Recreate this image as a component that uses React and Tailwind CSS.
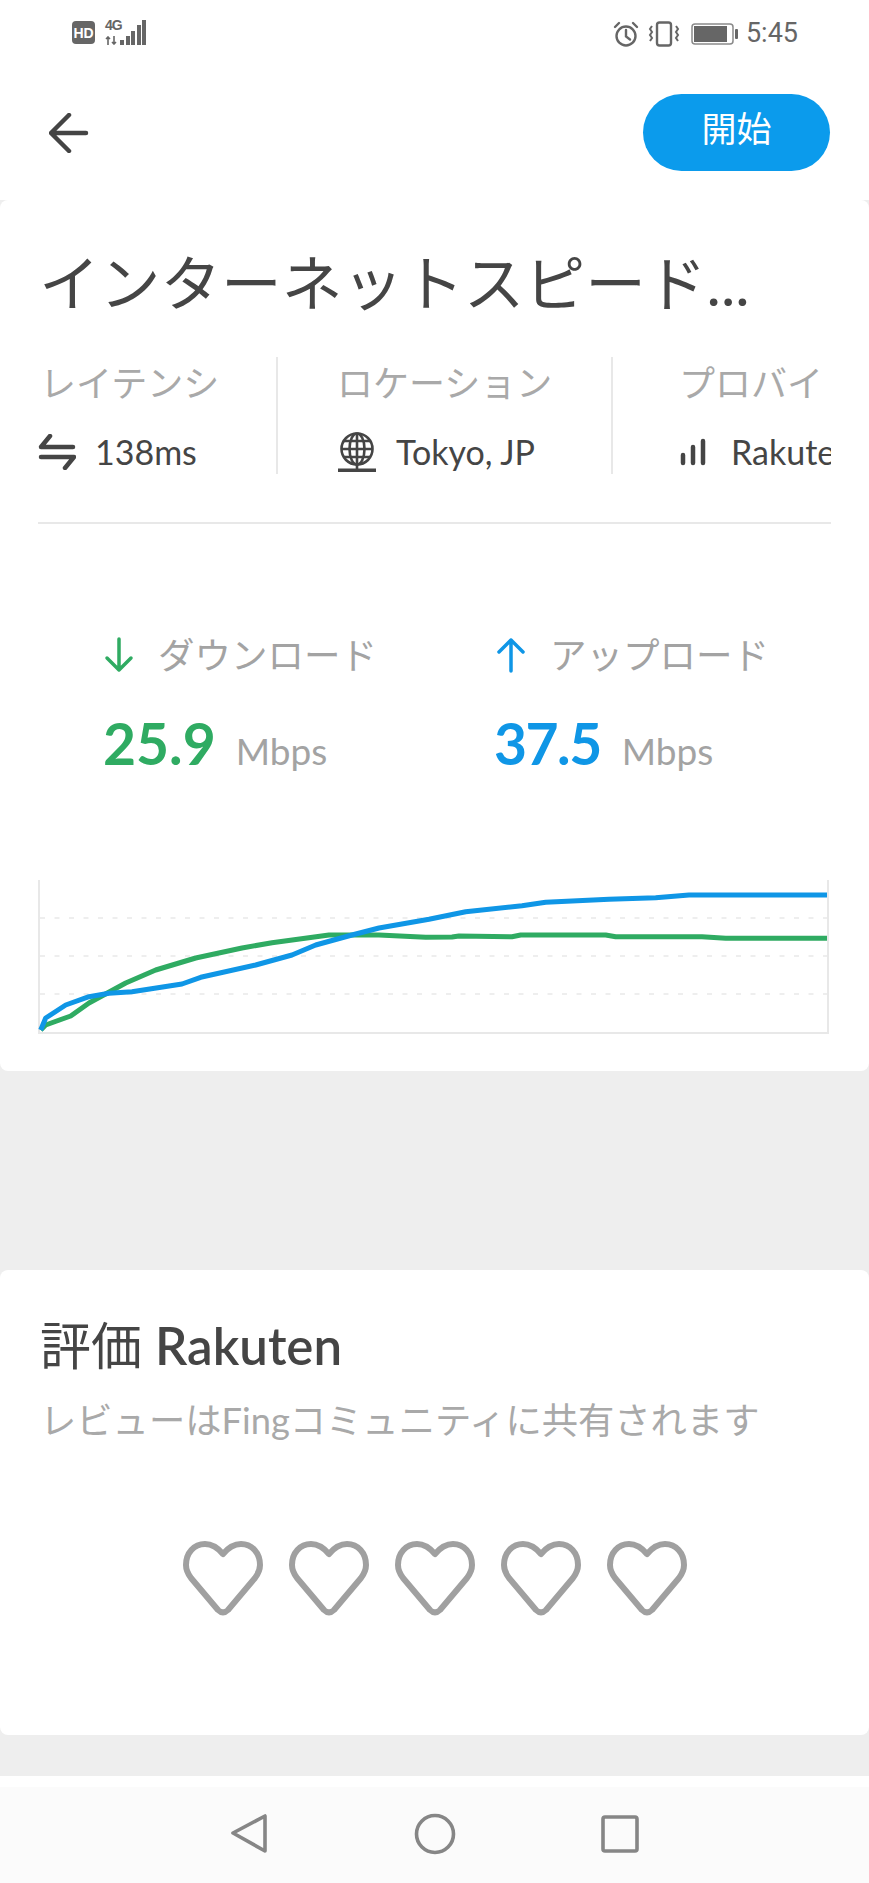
import React from "react";

const jp = "font-['Lato','Noto_Sans_CJK_JP',sans-serif]";

const green = [
  [41.7, 1030], [46.7, 1025], [71.7, 1016], [90, 1003], [126.7, 983], [156.7, 970], [196.7, 958],
  [243, 948], [273, 942.7], [330, 935], [380, 935], [426.7, 937.3], [453, 937], [460, 936],
  [513, 936.7], [521.7, 935], [606.7, 935], [616.7, 936.7], [703, 936.7], [726.7, 938.3], [828, 938.3],
];

const blue = [
  [41.7, 1030], [46.7, 1018], [66.7, 1005], [90, 996.7], [110, 993.3], [133, 991.7], [183, 984],
  [201.7, 977.3], [256.7, 965], [293, 955], [316.7, 945], [353, 935], [380, 928], [430, 919.3],
  [466.7, 911.7], [523, 905.7], [546.7, 902.3], [610, 899.3], [656.7, 897.7], [690, 895], [828, 895],
];

const toPoints = (list) => list.map((p) => p.join(",")).join(" ");

function StatusBar() {
  return (
    <div className="h-[60px] flex items-start justify-between pl-[72px] pr-[71px] pt-[20px] text-[#666666]">
      <div className="flex">
        <div className="w-[23px] h-[23px] mt-[1px] rounded-[4px] bg-[#666666] flex items-center justify-center text-white text-[14px] leading-none font-bold font-['Liberation_Sans',sans-serif]">
          HD
        </div>
        <div className="ml-[10px] w-[14px] flex flex-col">
          <span className="text-[14px] leading-[11px] font-bold tracking-[-1px] font-['Liberation_Sans',sans-serif]">4G</span>
          <svg width="14" height="9" viewBox="0 0 14 9" className="mt-[5px]" fill="none" stroke="#666666" strokeWidth="1.6">
            <path d="M3 9V1M1 3l2-2 2 2M9 0v8M7 6l2 2 2-2" />
          </svg>
        </div>
        <svg width="28" height="25" viewBox="0 0 28 25" className="-ml-[1px]" fill="#666666">
          <rect x="2" y="20" width="4" height="5" />
          <rect x="8" y="16" width="4" height="9" />
          <rect x="13" y="11" width="4" height="14" />
          <rect x="19" y="5" width="4" height="20" />
          <rect x="24" y="0" width="4" height="25" />
        </svg>
      </div>
      <div className="flex items-center">
        <svg width="26" height="26" viewBox="0 0 26 26" fill="none" stroke="#666666" strokeWidth="2.4" strokeLinecap="round">
          <circle cx="13" cy="15" r="9.5" />
          <path d="M13 9v6.5l4 3M2 6l4-4M24 6l-4-4" />
        </svg>
        <svg width="34" height="26" viewBox="0 0 34 26" className="ml-[8px]" fill="none" stroke="#666666" strokeWidth="2">
          <rect x="10" y="1.5" width="14" height="23" rx="2.5" strokeWidth="2.4" />
          <path d="M5 5l-2 3 2 3-2 3 2 3-2 3M29 5l2 3-2 3 2 3-2 3 2 3" />
        </svg>
        <svg width="47" height="22" viewBox="0 0 47 22" className="ml-[10px]">
          <rect x="1" y="1" width="41" height="20" rx="3" fill="none" stroke="#8a8a8a" strokeWidth="1.5" />
          <rect x="3" y="3" width="33" height="16" fill="#666666" />
          <rect x="44" y="6" width="3" height="10" rx="1" fill="#666666" />
        </svg>
        <span className="ml-[8px] text-[27px] leading-none font-['Roboto',sans-serif]">5:45</span>
      </div>
    </div>
  );
}

function Header() {
  return (
    <div className="h-[140px] flex items-start justify-between pl-[49px] pr-[39px] pt-[34px]">
      <svg width="40" height="40" viewBox="0 0 40 40" className="mt-[19px]" fill="none" stroke="#444444" strokeWidth="4.5" strokeLinecap="round" strokeLinejoin="round">
        <path d="M37 20H3M20 2L2 20l18 18" />
      </svg>
      <button className={`w-[187px] h-[77px] pb-[8px] rounded-full bg-[#0b9bec] text-white text-[35px] leading-none ${jp}`}>
        開始
      </button>
    </div>
  );
}

function Stat({ label, icon, value, className }) {
  return (
    <div className={`h-[117px] shrink-0 ${className}`}>
      <div className="text-[36px] leading-[52px] text-[#a9a9a9] whitespace-nowrap">{label}</div>
      <div className="mt-[23px] flex items-center text-[34px] leading-[40px] text-[#454545] whitespace-nowrap">
        {icon}
        {value}
      </div>
    </div>
  );
}

function Speed({ color, arrow, label, value, gap, numberClass, className }) {
  return (
    <div className={`w-[390px] shrink-0 ${className}`}>
      <div className="flex items-center h-[52px]">
        <svg width="30" height="36" viewBox="0 0 30 36" fill="none" stroke={color} strokeWidth="3.5" strokeLinecap="round" strokeLinejoin="round">
          <path d={arrow} />
        </svg>
        <span className="ml-[24px] text-[36.5px] leading-none text-[#a3a3a3] whitespace-nowrap">{label}</span>
      </div>
      <div className="mt-[30px] flex items-baseline h-[64px]">
        <span className={`text-[57px] leading-[64px] font-bold ${numberClass}`} style={{ color }}>{value}</span>
        <span className={`text-[37px] leading-none text-[#a3a3a3] ${gap}`}>Mbps</span>
      </div>
    </div>
  );
}

function Chart() {
  return (
    <svg width="792" height="156" viewBox="39 879 792 156" className="block mt-[104px] ml-[38px]" fill="none">
      <path d="M40 880V1033H829V880" stroke="#e8e8e8" strokeWidth="2" />
      <path d="M41 918H828M41 956H828M41 994H828" stroke="#e9e9e9" strokeWidth="1.5" strokeDasharray="5 9.5" />
      <polyline points={toPoints(green)} stroke="#2fab62" strokeWidth="5" strokeLinejoin="round" />
      <polyline points={toPoints(blue)} stroke="#0f96e6" strokeWidth="5" strokeLinejoin="round" />
    </svg>
  );
}

function Heart() {
  return (
    <svg width="80" height="76" viewBox="0 0 80 76" fill="none" stroke="#a0a0a0" strokeWidth="6" strokeLinejoin="round">
      <path d="M40 13C35 7 29 3 22 3C11 3 3 12 3 24C3 29 5 33 8 37L35 69Q40 74 45 69L72 37C75 33 77 29 77 24C77 12 69 3 58 3C51 3 45 7 40 13Z" />
    </svg>
  );
}

export default function App() {
  return (
    <div className={`w-[869px] h-[1883px] flex flex-col bg-white ${jp}`}>
      <StatusBar />
      <Header />
      <div className="bg-[#eeeeee] flex flex-col">
        <div className="h-[871px] bg-white rounded-[8px] overflow-hidden pt-[46px]">
          <h1 className="ml-[39px] text-[60.7px] leading-[74px] font-normal text-[#454545] whitespace-nowrap">インターネットスピード...</h1>

          <div className="mt-[37px] mx-[38px] flex overflow-hidden">
            <Stat
              className="w-[240px] pl-[2px] border-r-2 border-[#e8e8e8]"
              label="レイテンシ"
              value="138ms"
              icon={
                <svg width="38" height="36" viewBox="0 0 38 36" className="shrink-0 -ml-[2px] mr-[19px]" fill="none" stroke="#454545" strokeWidth="4.5" strokeLinecap="round" strokeLinejoin="round">
                  <path d="M35 13H3L12 2M3 23H36L27 34" />
                </svg>
              }
            />
            <Stat
              className="w-[335px] pl-[59px] border-r-2 border-[#e8e8e8]"
              label="ロケーション"
              value="Tokyo, JP"
              icon={
                <svg width="40" height="40" viewBox="0 0 40 40" className="shrink-0 mr-[19px]" fill="none" stroke="#454545" strokeWidth="2.6">
                  <circle cx="20" cy="17" r="15.5" />
                  <ellipse cx="20" cy="17" rx="7.5" ry="15.5" />
                  <path d="M20 1.5V32.5M4.5 17H35.5M7 9H33M7 25H33M20 32v6" />
                  <path d="M1 38.3H39" strokeWidth="3.4" />
                </svg>
              }
            />
            <Stat
              className="flex-1 min-w-0 overflow-hidden pl-[66px]"
              label="プロバイ"
              value="Rakuten"
              icon={
                <svg width="28" height="28" viewBox="0 0 28 28" className="shrink-0 mr-[24px]" fill="none" stroke="#454545" strokeWidth="4.5" strokeLinecap="round">
                  <path d="M4 25V17M14 25V9M24 25V3" />
                </svg>
              }
            />
          </div>

          <div className="mt-[48px] mx-[38px] h-[2px] bg-[#e8e8e8]" />

          <div className="mt-[105px] flex">
            <Speed
              className="ml-[104px]"
              color="#2fab62"
              arrow="M15 2V33M3 21L15 33L27 21"
              label="ダウンロード"
              value="25.9"
              numberClass="-ml-[1px]"
              gap="ml-[20px]"
            />
            <Speed
              className="ml-[2px]"
              color="#0f96e6"
              arrow="M15 34V3M3 15L15 3L27 15"
              label="アップロード"
              value="37.5"
              numberClass="-ml-[2px] tracking-[-1.5px]"
              gap="ml-[21px]"
            />
          </div>

          <Chart />
        </div>

        <div className="h-[199px]" />

        <div className="h-[465px] bg-white rounded-[8px] pt-[46px]">
          <h2 className="ml-[40px] text-[51px] leading-[60px] font-normal text-[#454545]">
            評価 <span className="font-semibold">Rakuten</span>
          </h2>
          <p className="ml-[40px] mt-[20px] text-[36.3px] leading-[48px] text-[#a9a9a9] whitespace-nowrap">
            レビューはFingコミュニティに共有されます
          </p>
          <div className="mt-[97px] flex justify-center gap-[26px]">
            <Heart />
            <Heart />
            <Heart />
            <Heart />
            <Heart />
          </div>
        </div>

        <div className="h-[41px]" />
      </div>

      <div className="h-[11px] bg-white" />
      <div className="flex-1 bg-[#fbfbfb] flex items-center pb-[2px] pl-[229px]">
        <svg width="40" height="42" viewBox="0 0 40 42" fill="none" stroke="#868686" strokeWidth="3.6" strokeLinejoin="round">
          <path d="M36 3V38L4 20Z" />
        </svg>
        <svg width="44" height="44" viewBox="0 0 44 44" className="ml-[144px]" fill="none" stroke="#868686" strokeWidth="3.6">
          <circle cx="22" cy="22" r="18.5" />
        </svg>
        <svg width="38" height="38" viewBox="0 0 38 38" className="ml-[144px]" fill="none" stroke="#868686" strokeWidth="3.6" strokeLinejoin="round">
          <rect x="2" y="2" width="34" height="34" rx="2" />
        </svg>
      </div>
    </div>
  );
}
